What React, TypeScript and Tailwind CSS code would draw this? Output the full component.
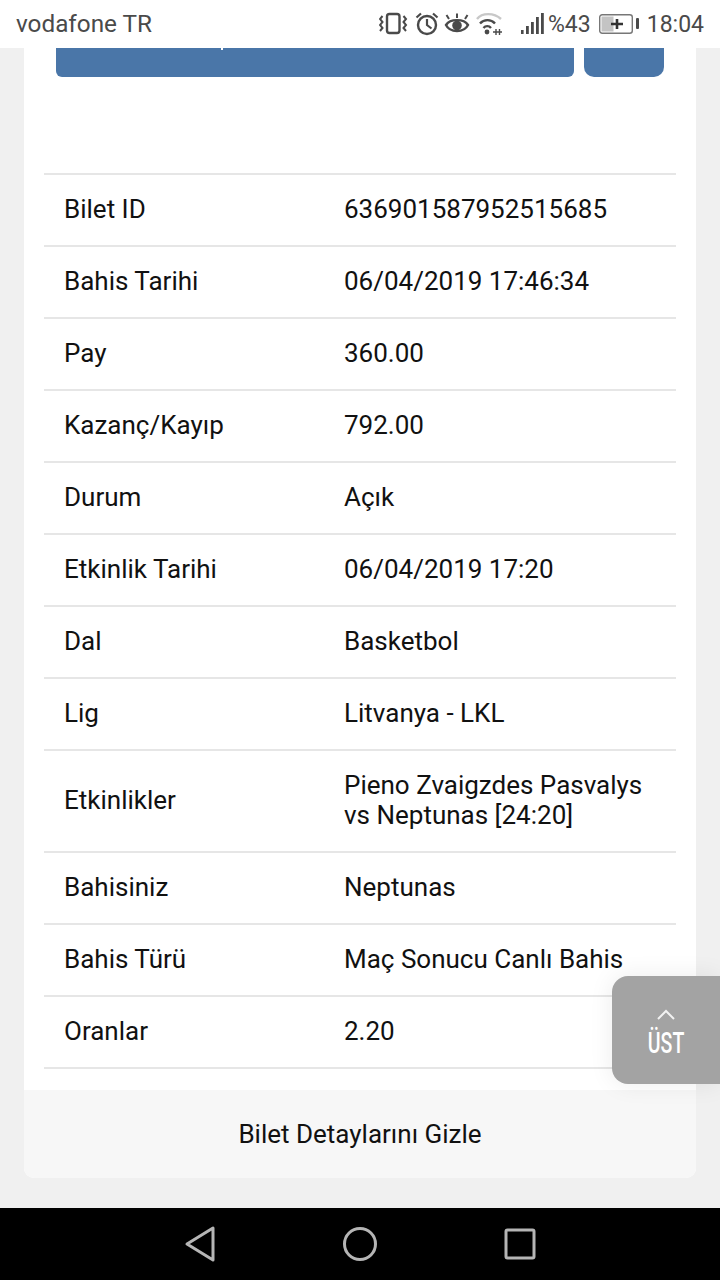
import React from "react";

const rows: [string, string][] = [
  ["Bilet ID", "636901587952515685"],
  ["Bahis Tarihi", "06/04/2019 17:46:34"],
  ["Pay", "360.00"],
  ["Kazanç/Kayıp", "792.00"],
  ["Durum", "Açık"],
  ["Etkinlik Tarihi", "06/04/2019 17:20"],
  ["Dal", "Basketbol"],
  ["Lig", "Litvanya - LKL"],
  ["Etkinlikler", "Pieno Zvaigzdes Pasvalys vs Neptunas [24:20]"],
  ["Bahisiniz", "Neptunas"],
  ["Bahis Türü", "Maç Sonucu Canlı Bahis"],
  ["Oranlar", "2.20"],
];

function StatusIcons() {
  return (
    <svg width="124" height="28" viewBox="0 0 124 28" fill="none" stroke="#4a4a4a" strokeWidth="2.4">
      {/* vibrate */}
      <rect x="8" y="4" width="12.5" height="19" rx="2.5" />
      <path d="M3.5 6 L1 9 L3.5 12 L1 15 L3.5 18 L1 21 M24.5 6 L27 9 L24.5 12 L27 15 L24.5 18 L27 21" strokeWidth="2" />
      {/* alarm */}
      <circle cx="48" cy="15" r="9" />
      <path d="M48 9 V15 L52.5 18.5 M37.5 7.5 L42 3.5 M54 3.5 L58.5 7.5" strokeWidth="2.2" />
      {/* eye */}
      <path d="M67 15 C71 8.5 85 8.5 89 15 C85 23 71 23 67 15 Z" />
      <circle cx="78" cy="15.5" r="4.8" fill="#4a4a4a" stroke="none" />
      <path d="M70 9 L67.5 5 M78 8 V3.5 M86 9 L88.5 5" strokeWidth="2" />
      {/* wifi */}
      <path d="M98 9 C103 2.5 115 2.5 122 9" stroke="#c8c8c8" />
      <path d="M101 13.5 C105 9 112 9 116 13.5 M104.5 18 C106.5 15.5 110 15.5 112 18" />
      <circle cx="108" cy="22" r="2.4" fill="#4a4a4a" stroke="none" />
      <path d="M114 22 H123 M117 19 V25 M120.5 19 V25" strokeWidth="1.4" />
    </svg>
  );
}

function SignalIcon() {
  return (
    <svg width="23" height="24" viewBox="0 0 23 24" fill="#4a4a4a">
      <rect x="0" y="18" width="2.6" height="4" />
      <rect x="5" y="14" width="2.8" height="8" />
      <rect x="10" y="10" width="2.8" height="12" />
      <rect x="15" y="5" width="2.8" height="17" />
      <rect x="20" y="1" width="2.8" height="21" />
    </svg>
  );
}

function BatteryIcon() {
  return (
    <svg width="40" height="20" viewBox="0 0 40 20" fill="none">
      <rect x="0.7" y="0.7" width="32.6" height="18.6" rx="2.5" stroke="#777" strokeWidth="1.4" />
      <rect x="2.5" y="2.5" width="12" height="15" fill="#c4c4c4" />
      <path d="M12 10 H24 M18 5 V15" stroke="#333" strokeWidth="2.6" />
      <rect x="37" y="4" width="3" height="11" rx="1" fill="#4a4a4a" />
    </svg>
  );
}

export default function App() {
  return (
    <div className="relative flex h-[1280px] w-[720px] flex-col overflow-hidden bg-[#f0f0f0] font-['Roboto',sans-serif] text-[26px] leading-[30px] text-[#111]">
      <header className="flex h-12 shrink-0 items-center justify-between bg-white px-4 text-[#4a4a4a]">
        <span className="text-[24.3px] leading-none">vodafone TR</span>
        <div className="flex items-center">
          <StatusIcons />
          <span className="ml-[18px]"><SignalIcon /></span>
          <span className="ml-1 text-[23px] leading-none">%43</span>
          <span className="ml-2"><BatteryIcon /></span>
          <span className="ml-2 text-[23px] leading-none">18:04</span>
        </div>
      </header>

      <main className="mx-6 flex min-h-0 flex-1 flex-col">
        <div className="flex flex-col rounded-b-[10px] bg-white">
          <div className="flex gap-2.5 px-8">
            <div className="relative h-[29px] w-[518px] rounded-b-md bg-[#4a76a8]">
              <span className="absolute left-[165px] top-0 h-0.5 w-0.5 bg-white" />
            </div>
            <div className="h-[29px] w-20 rounded-b-[10px] bg-[#4a76a8]" />
          </div>
          <div className="mx-5 mt-24">
            {rows.map(([label, value]) => (
              <div key={label} className="flex items-center border-t-2 border-[#e6e6e6] pb-[21px] pt-[19px]">
                <div className="w-[280px] shrink-0 pl-5">{label}</div>
                <div className="w-[325px] pl-5">{value}</div>
              </div>
            ))}
            <div className="h-[23px] border-t-2 border-[#e6e6e6]" />
          </div>
          <div className="rounded-b-[10px] bg-[#f7f7f7] py-[29px] text-center">Bilet Detaylarını Gizle</div>
        </div>
      </main>

      <nav className="flex h-[72px] shrink-0 items-center justify-center gap-[104px] bg-black">
        <svg width="56" height="44" viewBox="0 0 56 44" fill="none" stroke="#b5b5b5" strokeWidth="3" strokeLinejoin="round">
          <path d="M41 6 V38 L15 22 Z" />
        </svg>
        <svg width="56" height="44" viewBox="0 0 56 44" fill="none" stroke="#b5b5b5" strokeWidth="3">
          <circle cx="28" cy="22" r="15.5" />
        </svg>
        <svg width="56" height="44" viewBox="0 0 56 44" fill="none" stroke="#b5b5b5" strokeWidth="3" strokeLinejoin="round">
          <rect x="14" y="8" width="28" height="28" rx="1.5" />
        </svg>
      </nav>

      <button className="absolute right-0 top-[976px] flex h-[108px] w-[108px] flex-col items-center justify-center rounded-l-2xl bg-[#a3a3a3] text-white shadow-[0_0_24px_rgba(0,0,0,0.08)]">
        <svg className="mt-2" width="20" height="12" viewBox="0 0 20 12" fill="none" stroke="#f2f2f2" strokeWidth="2">
          <path d="M2 11 L10 3 L18 11" />
        </svg>
        <span className="mt-1.5 scale-x-[0.65] text-[30px] font-medium leading-[34px]">ÜST</span>
      </button>
    </div>
  );
}
